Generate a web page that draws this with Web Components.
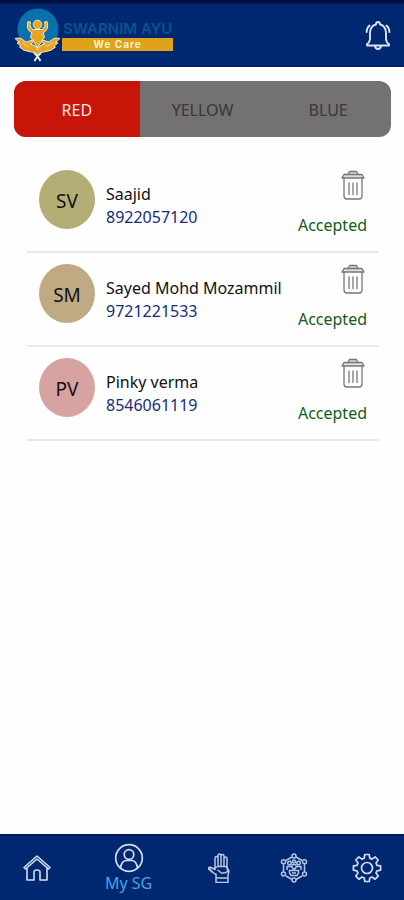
<!DOCTYPE html>
<html lang="en">
<head>
<meta charset="utf-8">
<meta name="viewport" content="width=device-width, initial-scale=1">
<title>Swarnim Ayu - My SG</title>
<style>
  body { margin: 0; background: #fefefe; font-family: "Noto Sans", "Open Sans", sans-serif; font-size: 16px; color: #111; }
</style>
</head>
<body>
<app-shell>
  <app-header slot="header"></app-header>
  <zone-tabs></zone-tabs>
  <contact-list>
    <contact-row initials="SV" name="Saajid" phone="8922057120" status="Accepted" tint="#b4ae76"></contact-row>
    <contact-row initials="SM" name="Sayed Mohd Mozammil" phone="9721221533" status="Accepted" tint="#bfaa83"></contact-row>
    <contact-row initials="PV" name="Pinky verma" phone="8546061119" status="Accepted" tint="#d6a3a0"></contact-row>
  </contact-list>
  <bottom-nav slot="footer">
    <nav-item label="Home">
      <svg width="30" height="30" viewBox="0 0 30 30" fill="none" stroke="#d3dcf0" stroke-width="1.600" stroke-linejoin="round" stroke-linecap="round"><path d="M2 14.500 15 3l13 11.500-1.500 1.500L15 6 3.500 16z"/><path d="M5 15v12h7v-8q0-2 3-2t3 2v8h7V15"/></svg>
    </nav-item>
    <nav-item label="My SG" active>
      <svg width="30" height="30" viewBox="0 0 30 30" fill="none" stroke="#d3dcf0" stroke-width="1.700"><circle cx="15" cy="15" r="13.300"/><circle cx="15" cy="11.500" r="4.800"/><path d="M6.500 25q1-7 5.500-7.500h6q4.500.5 5.500 7.500"/></svg>
    </nav-item>
    <nav-item label="Care">
      <svg width="30" height="30" viewBox="0 0 30 30" fill="none" stroke="#b9c7e2" stroke-width="1.500" stroke-linejoin="round"><path d="M10 21 4 16.500q-1-1.500.5-2t2.500.5l3 1.500V5q0-1.500 1.500-1.500T13 5v8V2.500Q13 1 14.500 1T16 2.500V13 3q0-1.500 1.500-1.500T19 3v10-7.500Q19 4 20.500 4T22 5.500V15l2 3-1 4v7.500H11V21z"/><path d="M9 16q1.500-2.500 4.500-2.500h7.500q2.500 2 1.500 5-2 2-6 1.500L12.500 17M11 25h12M3.500 14l4 5.500"/></svg>
    </nav-item>
    <nav-item label="Network">
      <svg width="30" height="30" viewBox="0 0 30 30" fill="none" stroke="#b3c3e2" stroke-width="1.500"><path d="m17 4 6 3.500M25.500 11v8M23 23l-6 3.500M13 26.500 7 23M4.500 19v-8M7 7.500 13 4"/><circle cx="15" cy="3" r="2"/><circle cx="25.500" cy="8.800" r="2"/><circle cx="25.500" cy="21" r="2"/><circle cx="15" cy="27" r="2"/><circle cx="4.500" cy="21" r="2"/><circle cx="4.500" cy="8.800" r="2"/><circle cx="10.500" cy="10" r="1.800"/><circle cx="15" cy="8.500" r="1.500"/><circle cx="19.500" cy="10" r="1.800"/><path d="M8 17v-3.500h4.500L15 17l2.500-3.500H22V17M12.500 12.500q2.500-2 5 0M10.500 17.500h9V20l-1.500 2.500h-6L10.500 20zM13 20h4"/></svg>
    </nav-item>
    <nav-item label="Settings">
      <svg width="30" height="30" viewBox="0 0 30 30" fill="none" stroke="#d3dcf0" stroke-width="1.700" stroke-linejoin="round"><circle cx="15" cy="15" r="5.500"/><path d="M12.800 1.500h4.400l.6 3.600 2.300 1 3-2.200 3.100 3.100-2.200 3 1 2.300 3.600.6v4.300l-3.600.6-1 2.300 2.200 3-3.100 3.100-3-2.200-2.300 1-.6 3.500h-4.400l-.6-3.500-2.300-1-3 2.200-3.100-3.100 2.200-3-1-2.300-3.600-.6v-4.300l3.600-.6 1-2.300-2.200-3 3.100-3.100 3 2.200 2.300-1z"/></svg>
    </nav-item>
  </bottom-nav>
</app-shell>

<script>
  const define = (tag, markup, setup) => {
    const template = document.createElement('template');
    template.innerHTML = markup;
    customElements.define(tag, class extends HTMLElement {
      connectedCallback() {
        if (this.shadowRoot) return;
        this.attachShadow({ mode: 'open' }).append(template.content.cloneNode(true));
        if (setup) setup(this, this.shadowRoot);
      }
    });
  };

  define('app-shell', `
    <style>
      :host { display: flex; flex-direction: column; min-height: 100vh; }
      main { flex: 1; padding: 14px 13px 16px 14px; }
    </style>
    <slot name="header"></slot><main><slot></slot></main><slot name="footer"></slot>`);

  define('app-header', `
    <style>
      :host { display: block; }
      header { display: flex; align-items: center; justify-content: space-between; box-sizing: border-box; height: 67px;
        padding: 4px 12px 0 14px; background: linear-gradient(#020f3e 0, #020f3e 2px, #002870 5px); border-bottom: 1px solid #001c62; }
      button { display: flex; padding: 0; border: 0; background: none; cursor: pointer; }
    </style>
    <header>
      <brand-logo></brand-logo>
      <button type="button" aria-label="Notifications">
        <svg width="28" height="32" viewBox="0 0 28 32" fill="none" stroke="#dce4f3" stroke-width="1.900" stroke-linejoin="round" stroke-linecap="round"><path d="M12 5.500Q12 3 14 3t2 2.500q5.500 1.300 6 8V20q.3 3.500 3 5v1.500H3V25q2.700-1.500 3-5v-6.500q.5-6.700 6-8zM11 27q.5 3 3 3t3-3M5.500 6.500Q2.800 8.800 2.600 13M22.500 6.500q2.700 2.300 2.900 6.500"/></svg>
      </button>
    </header>`);

  define('brand-logo', `
    <style>
      :host { display: flex; align-items: center; gap: 2px; }
      .words { display: flex; flex-direction: column; }
      .title { font: 600 15px/19px Inter, "Noto Sans", sans-serif; color: #075493; white-space: nowrap; padding: 0 1px; }
      .tag { font: 700 10px/13px Inter, "Noto Sans", sans-serif; letter-spacing: 1px; color: #fff3cf; background: #e0a21d; text-align: center; }
    </style>
    <svg width="46" height="54" viewBox="0 0 46 54" aria-hidden="true">
      <circle cx="24" cy="21" r="20.500" fill="#0b70ac"/>
      <g stroke="#f4ead0" stroke-width="1" stroke-linejoin="round">
        <path fill="#e8a51e" d="M14 13.500q-2.500 8 4 11.500l-1.500 4q3 4 7 11 4-7 7-11L29 25q6.500-3.500 4-11.500l-2.500.5q1.500 5-2.500 7.500h-9q-4-2.500-2.500-7.500z"/>
        <circle cx="23.500" cy="16.500" r="4.300" fill="#e8a51e"/>
        <path fill="#e8a51e" d="M1 30.500q3-1 6 0L12 34l7-2q2 1-1 3l-2 1q6 1 7.500 6Q25 37 31 36l-2-1q-3-2-1-3l7 2 5-3.500q3-1 6 0-3 3-5 4l3 .5-4 3 1.500 1q-4 4-9.500 4.500-6 0-8.500 4-2.500-4-8.500-4Q9.500 43 5.500 39L7 38l-4-3 3-.5q-2-1-5-4z"/>
        <path fill="none" stroke-width=".7" d="m8 35 7 4M39 35l-7 4"/>
      </g>
      <path d="M20 45q3 2 6.500 8M27 45q-3 2-6.500 8" fill="none" stroke="#e8eee9" stroke-width="2"/>
    </svg>
    <div class="words"><span class="title">SWARNIM AYU</span><span class="tag">We Care</span></div>`);

  define('zone-tabs', `
    <style>
      :host { display: block; }
      div { display: grid; grid-template-columns: repeat(3, 1fr); height: 56px; border-radius: 12px; overflow: hidden; background: #737171; }
      button { padding: 2px 0 0; border: 0; background: none; font: inherit; color: #383838; cursor: pointer; }
      [aria-selected="true"] { background: #c71508; color: #fae5e2; }
    </style>
    <div role="tablist">
      <button type="button" role="tab" aria-selected="true">RED</button>
      <button type="button" role="tab" aria-selected="false">YELLOW</button>
      <button type="button" role="tab" aria-selected="false">BLUE</button>
    </div>`,
    (host, root) => {
      const tabs = root.querySelectorAll('button');
      tabs.forEach(tab => tab.addEventListener('click', () =>
        tabs.forEach(t => t.setAttribute('aria-selected', String(t === tab)))));
    });

  define('contact-list', `
    <style>:host { display: block; padding: 22px 12px 0 13px; }</style><slot></slot>`);

  define('contact-row', `
    <style>
      :host { display: block; }
      article { display: flex; gap: 11px; box-sizing: border-box; height: 94px; padding: 11px 12px 0; border-bottom: 2px solid #e9e9e9; }
      .avatar { flex: none; display: grid; place-items: center; width: 56px; height: 59px; border-radius: 50%; font-size: 19px; padding-top: 2px; box-sizing: border-box; }
      .who { flex: 1; min-width: 0; padding-top: 13px; line-height: 23px; }
      .name { display: block; }
      .phone { display: block; color: #142d78; text-decoration: none; }
      .side { display: flex; flex-direction: column; align-items: flex-end; gap: 13px; }
      button { display: flex; margin-right: 2px; padding: 0; border: 0; background: none; cursor: pointer; }
      .status { line-height: 24px; color: #105c20; }
    </style>
    <article>
      <span class="avatar"></span>
      <div class="who"><span class="name"></span><a class="phone"></a></div>
      <div class="side">
        <button type="button">
          <svg width="24" height="30" viewBox="0 0 24 30" fill="none" stroke="#777" stroke-width="1.300" stroke-linejoin="round" stroke-linecap="round"><path fill="#ddd" d="M7 4.500 8.500 1.500h7L17 4.500h4l2 3.500H1l2-3.500z"/><path d="M7 4.500h10M3 8v18q0 3 3 3h12q3 0 3-3V8M8 13v11.500M12 13v11.500M16 13v11.500"/></svg>
        </button>
        <span class="status"></span>
      </div>
    </article>`,
    (host, root) => {
      const get = key => host.getAttribute(key);
      const avatar = root.querySelector('.avatar');
      avatar.textContent = get('initials');
      avatar.style.background = get('tint');
      root.querySelector('.name').textContent = get('name');
      const phone = root.querySelector('.phone');
      phone.textContent = get('phone');
      phone.href = 'tel:' + get('phone');
      root.querySelector('.status').textContent = get('status');
      root.querySelector('button').setAttribute('aria-label', 'Delete ' + get('name'));
    });

  define('bottom-nav', `
    <style>
      :host { display: block; position: sticky; bottom: 0; }
      nav { display: flex; box-sizing: border-box; height: 66px; background: #002870; border-top: 2px solid #001a5c; }
    </style>
    <nav aria-label="Main"><slot></slot></nav>`);

  define('nav-item', `
    <style>
      :host { display: flex; flex: 2 1 0; }
      :host([active]) { flex-grow: 3; }
      a { flex: 1; display: flex; flex-direction: column; align-items: center; justify-content: center; color: #48a3e0; text-decoration: none; line-height: 20px; }
      span:empty { display: none; }
    </style>
    <a href="#"><slot></slot><span></span></a>`,
    (host, root) => {
      const link = root.querySelector('a');
      link.setAttribute('aria-label', host.getAttribute('label'));
      if (host.hasAttribute('active')) {
        link.setAttribute('aria-current', 'page');
        root.querySelector('span').textContent = host.getAttribute('label');
      }
    });
</script>
</body>
</html>
